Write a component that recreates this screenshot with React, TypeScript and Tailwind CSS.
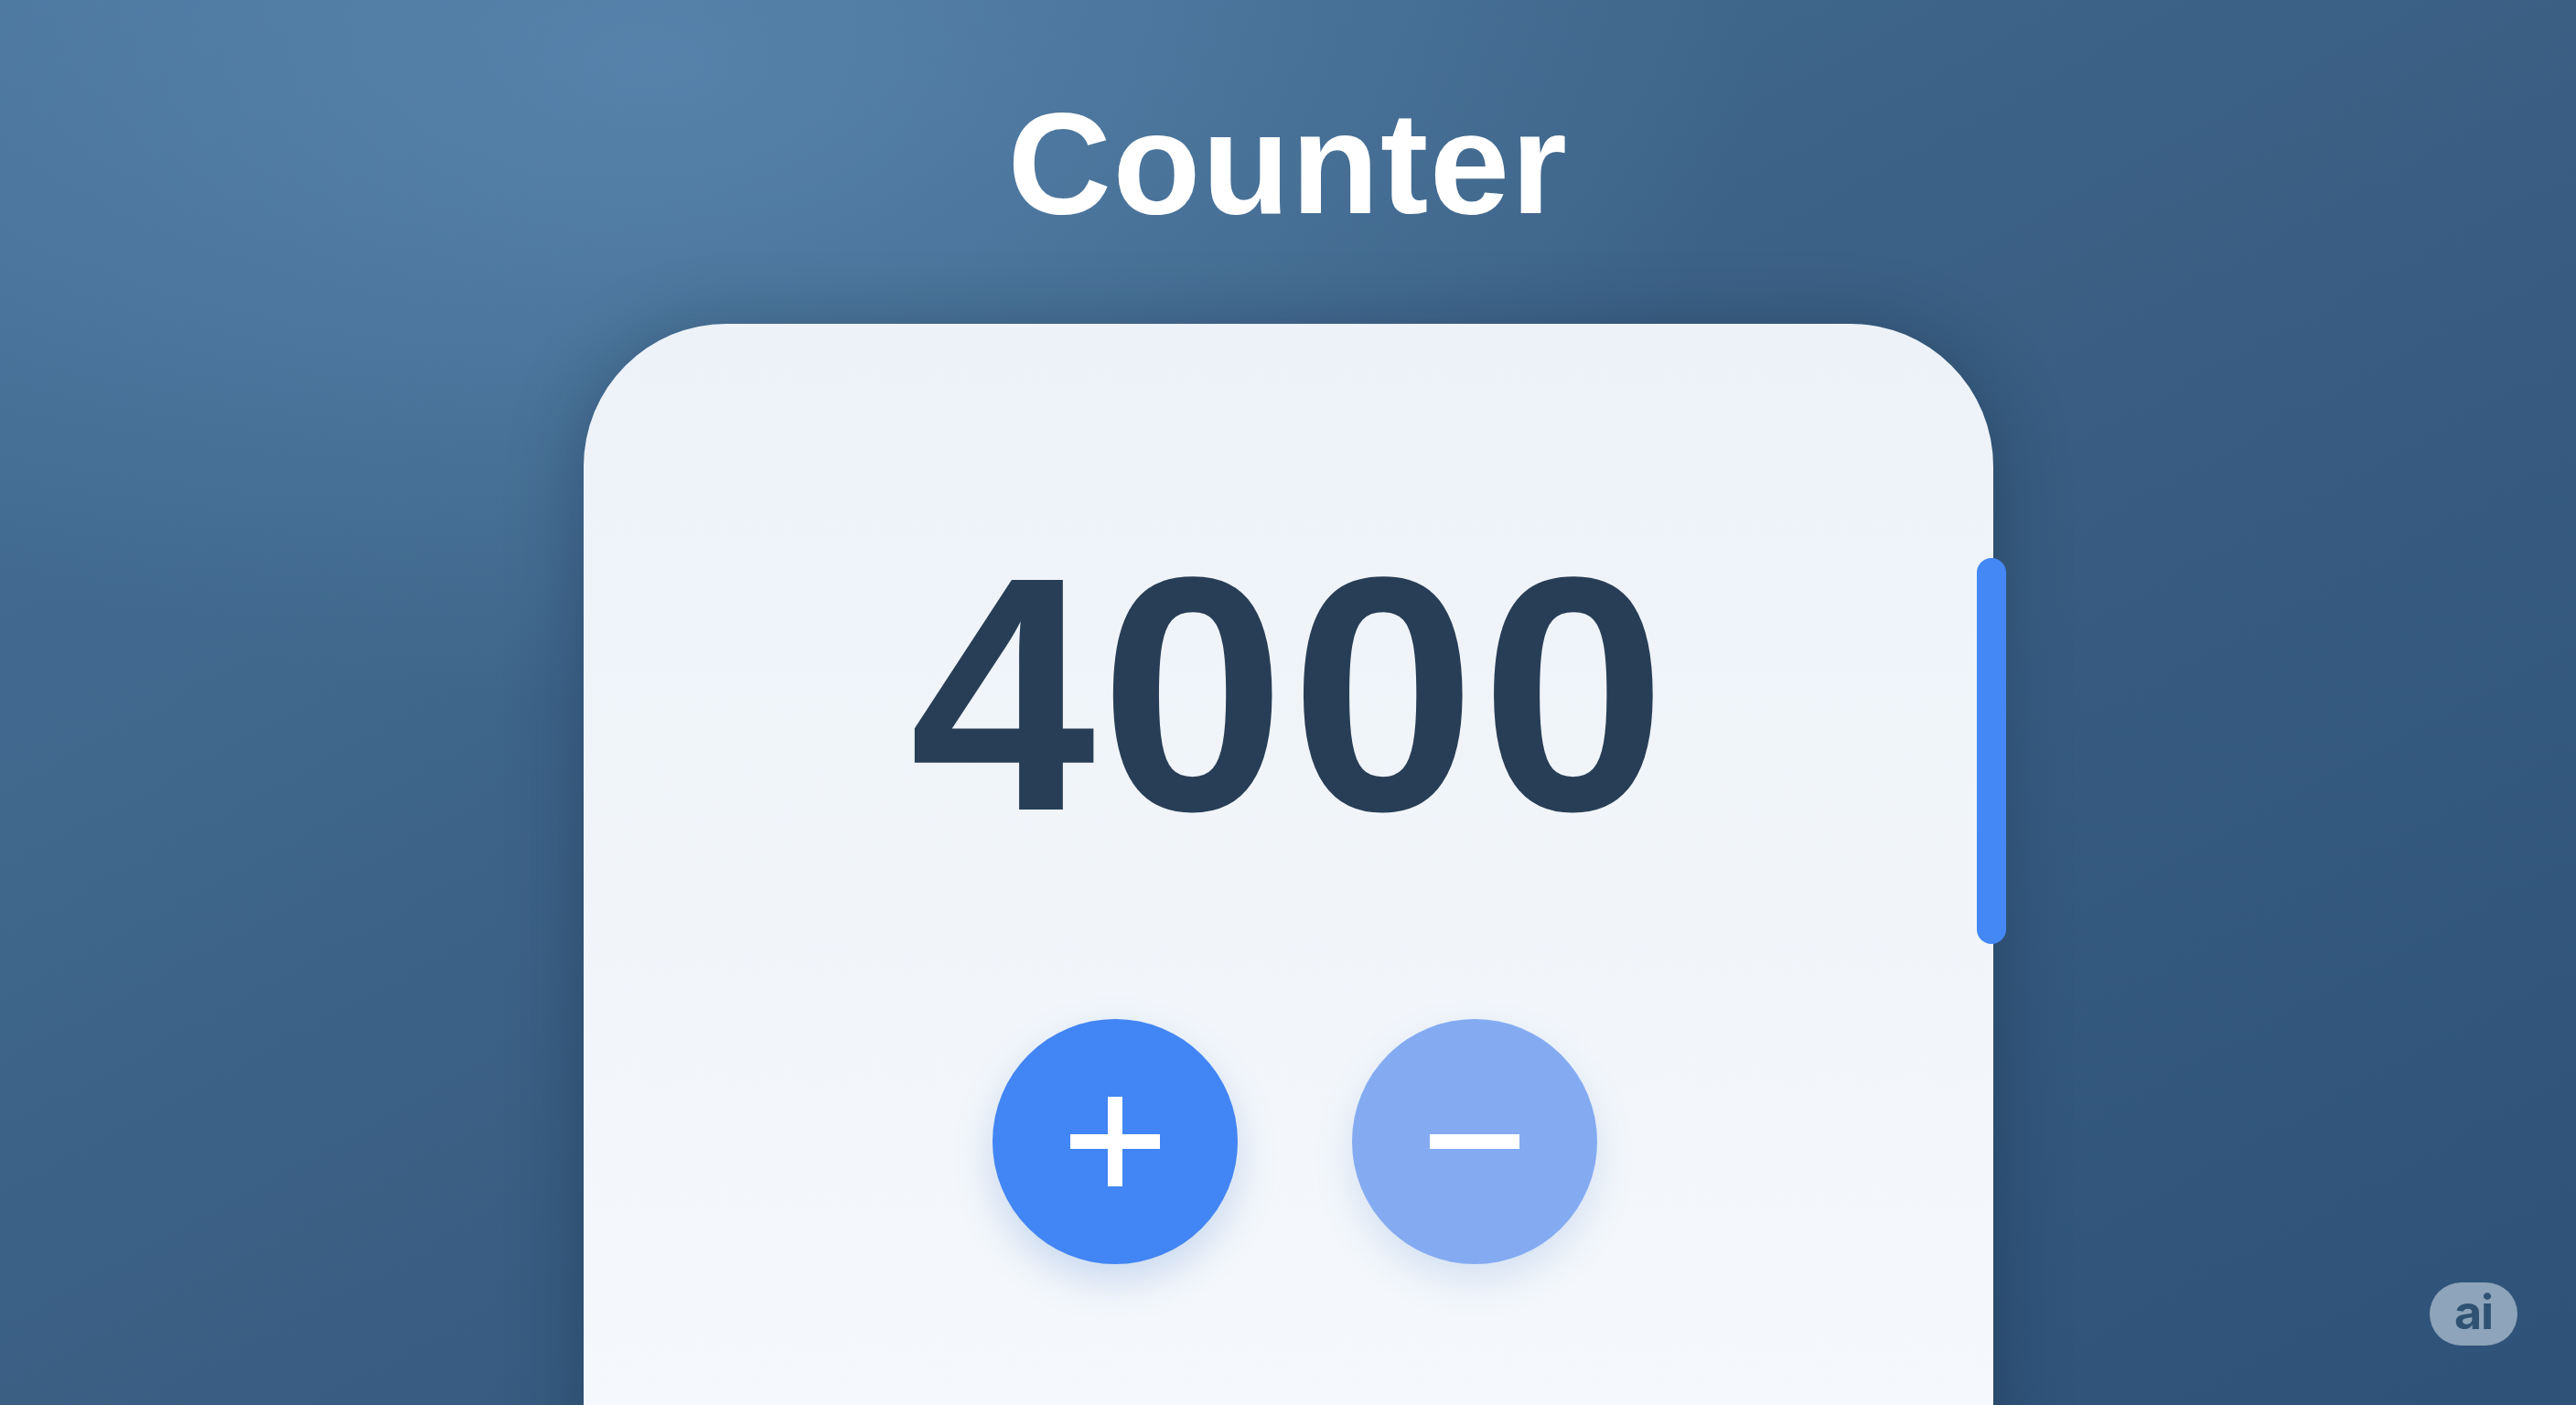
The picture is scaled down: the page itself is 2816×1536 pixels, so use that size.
const PlusIcon = () => (
  <svg width="100" height="100" viewBox="0 0 100 100" fill="#ffffff">
    <rect x="42" y="1" width="16" height="98" />
    <rect x="1" y="42" width="98" height="16" />
  </svg>
);

const MinusIcon = () => (
  <svg width="98" height="16" viewBox="0 0 98 16" fill="#ffffff">
    <rect x="0" y="0" width="98" height="16" />
  </svg>
);

const App = () => {
  return (
    <div className="relative h-screen w-full overflow-hidden font-['Liberation_Sans',Arial,sans-serif] [background-image:radial-gradient(ellipse_1200px_700px_at_720px_70px,rgba(104,152,194,0.5),rgba(104,152,194,0)),linear-gradient(to_bottom_right,#48729a,#3a5f83_50%,#2e5278)]">
      <div className="flex flex-col items-center pt-[100px]">
        <h1 className="h-[156px] text-[157px] font-bold leading-none tracking-[0.01em] text-white">
          Counter
        </h1>

        <div className="relative mt-[98px] h-[1300px] w-[1541px] rounded-t-[156px] bg-gradient-to-b from-[#edf2f8] to-[#f6f9fc] shadow-[0_10px_80px_rgba(12,28,48,0.35)]">
          <div className="flex flex-col items-center pt-[222px]">
            <div className="h-[365px] pl-[0.014em] text-[365px] font-bold leading-none tracking-[0.014em] text-[#283e56]">
              4000
            </div>

            <div className="mt-[173px] flex gap-[125px] pl-[14px]">
              <button className="flex h-[268px] w-[268px] items-center justify-center rounded-full bg-[#4285f4] shadow-[0_18px_44px_rgba(50,110,200,0.22)]">
                <PlusIcon />
              </button>
              <button className="flex h-[268px] w-[268px] items-center justify-center rounded-full bg-[#84abf2] shadow-[0_18px_44px_rgba(50,110,200,0.16)]">
                <MinusIcon />
              </button>
            </div>
          </div>

          {/* scroll thumb sitting on the card edge */}
          <div className="absolute right-[-14px] top-[256px] h-[422px] w-[32px] rounded-full bg-[#4388f5]" />
        </div>
      </div>

      <div className="absolute bottom-[65px] right-[64px] flex h-[69px] w-[96px] items-center justify-center rounded-full bg-[#8ea4ba] pb-[4px] font-['Inter',sans-serif] text-[52px] font-bold leading-none tracking-[-0.02em] text-[#2f5273]">
        ai
      </div>
    </div>
  );
};

export default App;
